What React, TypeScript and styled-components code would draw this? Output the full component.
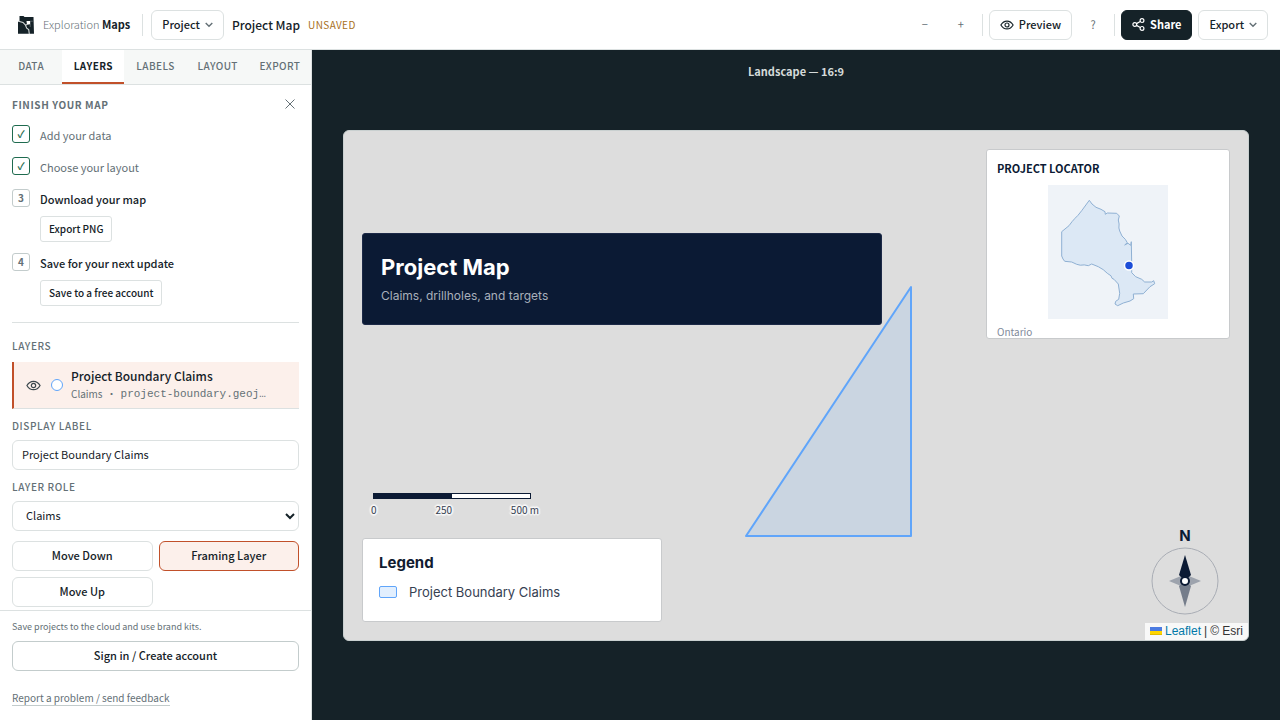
import React from "react";
import styled, { createGlobalStyle, css } from "styled-components";

const ui = `"Noto Sans CJK SC", "Noto Sans", sans-serif`;
const mapFont = `Inter, "Noto Sans", sans-serif`;
const ink = "#152228";
const muted = "#647076";
const line = "#dce1e1";
const accent = "#c1502a";

const Global = createGlobalStyle`
  * { box-sizing: border-box; }
  body { margin: 0; background: ${ink}; color: ${ink}; font: 400 11px/16px ${ui}; }
  button, input, select { font: inherit; color: inherit; margin: 0; }
  button { cursor: pointer; }
  h1, h2, h3, p, ol, ul { margin: 0; padding: 0; list-style: none; }
`;

const Page = styled.div`
  height: 100vh;
  display: grid;
  grid-template-rows: 50px minmax(0, 1fr);
`;

const TopBar = styled.header`
  display: flex;
  align-items: center;
  gap: 8px;
  padding: 0 12px 0 18px;
  background: #fff;
  border-bottom: 1px solid ${line};
`;

const Brand = styled.a`
  display: flex;
  align-items: center;
  gap: 9px;
  margin-right: 4px;
  color: ${muted};
  font-weight: 300;
  text-decoration: none;
  white-space: nowrap;
  span { padding-bottom: 2px; }
  b { color: ${ink}; font-weight: 700; }
`;

const Rule = styled.span`
  width: 1px;
  height: 22px;
  background: ${line};
`;

const Button = styled.button<{ $tone?: "dark" | "active" | "strong" }>`
  display: inline-flex;
  align-items: center;
  justify-content: center;
  gap: 5px;
  height: 30px;
  padding: 0 10px 2px;
  border: 1px solid ${line};
  border-radius: 6px;
  background: #fff;
  font-weight: 500;
  white-space: nowrap;
  svg { margin-top: 2px; }
  ${({ $tone }) => $tone === "dark" && css`background: ${ink}; border-color: ${ink}; color: #fff; font-weight: 700;`}
  ${({ $tone }) => $tone === "active" && css`background: #fcf0eb; border-color: ${accent};`}
  ${({ $tone }) => $tone === "strong" && css`border-color: #c3cccc;`}
`;

const GhostButton = styled.button`
  width: 30px;
  height: 30px;
  padding: 0 0 2px;
  border: 0;
  background: none;
  color: ${muted};
`;

const ProjectName = styled.h1`
  font-size: 12px;
  line-height: 16px;
  font-weight: 500;
`;

const Unsaved = styled.span`
  color: #a8701c;
  font-size: 10px;
  letter-spacing: 0.04em;
`;

const Tools = styled.div`
  display: flex;
  align-items: center;
  gap: 6px;
  margin-left: auto;
`;

const Body = styled.div`
  display: grid;
  grid-template-columns: 312px minmax(0, 1fr);
  min-height: 0;
`;

const Sidebar = styled.aside`
  display: flex;
  flex-direction: column;
  min-height: 0;
  background: #fff;
  border-right: 1px solid ${line};
`;

const Tabs = styled.div`
  display: grid;
  grid-template-columns: repeat(5, minmax(0, 1fr));
  height: 35px;
  flex: none;
  border-bottom: 1px solid ${line};
  background: #f6f8f7;
`;

const Tab = styled.button<{ $active?: boolean }>`
  padding: 0;
  border: 0;
  border-bottom: 2px solid ${({ $active }) => ($active ? accent : "transparent")};
  background: ${({ $active }) => ($active ? "#fff" : "transparent")};
  color: ${({ $active }) => ($active ? ink : muted)};
  font-size: 10px;
  font-weight: ${({ $active }) => ($active ? 700 : 500)};
  letter-spacing: 0.04em;
`;

const Panel = styled.div`
  flex: 1;
  min-height: 0;
  overflow: hidden;
  padding: 11px 12px 0;
`;

const Caption = styled.h2<{ $wide?: boolean }>`
  display: block;
  color: ${muted};
  font-size: 10px;
  line-height: 16px;
  font-weight: ${({ $wide }) => ($wide ? 700 : 500)};
  letter-spacing: 0.06em;
`;

const ChecklistHead = styled.div`
  display: flex;
  justify-content: space-between;
  align-items: center;
  height: 18px;
  margin-bottom: 11px;
`;

const CloseButton = styled.button`
  display: flex;
  padding: 2px 3px 4px;
  border: 0;
  background: none;
  color: ${muted};
`;

const Checklist = styled.ol`
  display: grid;
  gap: 11px;
  margin-bottom: 15px;
  padding-bottom: 16px;
  border-bottom: 1px solid ${line};
`;

const Step = styled.li<{ $done?: boolean }>`
  display: grid;
  grid-template-columns: 18px 1fr;
  column-gap: 10px;
  align-items: start;
  min-height: 21px;
  color: ${({ $done }) => ($done ? muted : ink)};
  font-weight: ${({ $done }) => ($done ? 400 : 500)};
`;

const StepMark = styled.span<{ $done?: boolean }>`
  display: flex;
  align-items: center;
  justify-content: center;
  height: 18px;
  border: 1px solid ${({ $done }) => ($done ? "#1f6b4f" : "#c3cccc")};
  border-radius: 3px;
  color: ${({ $done }) => ($done ? "#1f6b4f" : muted)};
  font-size: 10px;
  line-height: 16px;
  font-weight: 700;
`;

const StepText = styled.div`
  display: flex;
  flex-direction: column;
  align-items: flex-start;
  gap: 8px;
  padding-top: 1px;
  line-height: 18px;
`;

const SmallButton = styled.button`
  height: 26px;
  padding: 0 8px;
  border: 1px solid ${line};
  border-radius: 3px;
  background: #fff;
  font-size: 10px;
  font-weight: 500;
`;

const LayerRow = styled.div`
  display: flex;
  align-items: center;
  gap: 10px;
  height: 47px;
  margin: 8px 0 9px;
  padding: 0 10px 0 12px;
  border-left: 2px solid ${accent};
  border-bottom: 1px solid ${line};
  background: #fcf0eb;
`;

const IconButton = styled.button`
  display: flex;
  padding: 0;
  border: 0;
  background: none;
`;

const Swatch = styled.span`
  width: 12px;
  height: 12px;
  margin-right: -2px;
  border: 1px solid #60a5fa;
  border-radius: 50%;
  background: #fff;
`;

const LayerText = styled.div`
  min-width: 0;
  h3 { margin-bottom: 2px; font-size: 12px; line-height: 16px; font-weight: 500; }
  p { display: flex; gap: 4px; color: ${muted}; font-size: 10px; line-height: 16px; white-space: nowrap; }
  code { font-family: "Liberation Mono", monospace; font-size: 11px; }
`;

const Fields = styled.div`
  display: grid;
  gap: 9px;
  margin-bottom: 10px;
`;

const Field = styled.label`
  display: block;
  input, select {
    display: block;
    width: 100%;
    height: 30px;
    margin-top: 6px;
    padding: 0 9px 2px;
    border: 1px solid ${line};
    border-radius: 6px;
    background: #fff;
  }
`;

const Actions = styled.div`
  display: grid;
  grid-template-columns: 1fr 1fr;
  gap: 6px;
`;

const Footer = styled.footer`
  flex: none;
  display: grid;
  padding: 8px 12px 14px;
  border-top: 1px solid ${line};
  color: ${muted};
  p { font-size: 9px; }
  ${Button} { margin: 6px 0 19px; color: ${ink}; }
`;

const Feedback = styled.a`
  justify-self: start;
  border-bottom: 1px solid #c3cccc;
  color: ${muted};
  font-size: 10px;
  line-height: 15px;
  text-decoration: none;
`;

const Stage = styled.main`
  display: grid;
  grid-template-rows: 14px minmax(0, 1fr) 14px;
  padding: 14px 31px;
  color: #d5dbda;
`;

const StageLabel = styled.p`
  text-align: center;
  line-height: 14px;
  font-weight: 700;
`;

const MapCanvas = styled.section`
  position: relative;
  align-self: center;
  aspect-ratio: 906 / 511;
  overflow: hidden;
  border: 1px solid #c9d0d0;
  border-radius: 6px;
  background: #ddd;
  color: #0b1a34;
  font-family: ${mapFont};
`;

const Claim = styled.svg`
  position: absolute;
  inset: 0;
  width: 100%;
  height: 100%;
`;

const TitleCard = styled.div`
  position: absolute;
  left: 18px;
  top: 102px;
  width: 520px;
  height: 92px;
  padding: 18px;
  border: 1px solid #1c2947;
  border-radius: 3px;
  background: #0b1a34;
  color: #fff;
  h2 { font-size: 22px; line-height: 30px; font-weight: 700; }
  p { margin-top: 6px; color: #a9b0bb; font-size: 12px; line-height: 16px; }
`;

const Card = styled.div`
  position: absolute;
  border: 1px solid #c8cacc;
  border-radius: 3px;
  background: #fff;
`;

const LocatorCard = styled(Card)`
  top: 18px;
  right: 18px;
  width: 244px;
  height: 190px;
  padding: 10px;
  overflow: hidden;
  font-family: ${ui};
  h2 { font-size: 11px; line-height: 16px; font-weight: 700; }
  svg { display: block; margin: 9px auto 5px; }
  p { color: #7f899a; font-size: 10px; }
`;

const LegendCard = styled(Card)`
  left: 18px;
  bottom: 18px;
  width: 300px;
  height: 84px;
  padding: 14px 16px;
  color: #111c30;
  h2 { font-size: 15px; line-height: 20px; font-weight: 700; }
  p { display: flex; align-items: center; gap: 12px; margin-top: 9px; color: #364152; font-size: 13px; line-height: 20px; }
`;

const LegendSwatch = styled.span`
  width: 18px;
  height: 12px;
  border: 1px solid #60a5fa;
  border-radius: 2px;
  background: #e2effe;
`;

const Scale = styled.div`
  position: absolute;
  left: 27px;
  bottom: 123px;
  width: 168px;
`;

const ScaleBar = styled.div`
  width: 158px;
  height: 6px;
  margin-left: 2px;
  border: 1px solid #0b1a34;
  background: linear-gradient(90deg, #0b1a34 50%, #fff 50%);
`;

const ScaleLabels = styled.div`
  display: flex;
  justify-content: space-between;
  margin-top: 4px;
  color: #364152;
  font: 400 10px/14px ${ui};
  text-shadow: 2px 0 1px #f4f4f4, -2px 0 1px #f4f4f4, 0 2px 1px #f4f4f4, 0 -2px 1px #f4f4f4, 1px 1px 1px #fff, -1px -1px 1px #fff, 1px -1px 1px #fff, -1px 1px 1px #fff;
`;

const North = styled.div`
  position: absolute;
  right: 28px;
  bottom: 24px;
  display: grid;
  justify-items: center;
  font-size: 15px;
  line-height: 20px;
  font-weight: 700;
`;

const Attribution = styled.div`
  position: absolute;
  right: 0;
  bottom: 0;
  display: flex;
  align-items: center;
  gap: 3px;
  padding: 0 5px;
  background: rgba(255, 255, 255, 0.8);
  color: #333;
  font: 12px/17px "Liberation Sans", Arial, sans-serif;
  a { display: flex; align-items: center; gap: 3px; color: #0078a8; text-decoration: none; }
`;

const Eye = ({ size = 14, color = "currentColor" }: { size?: number; color?: string }) => (
  <svg width={size} height={size} viewBox="0 0 16 16" fill="none" stroke={color} strokeWidth="1.3" aria-hidden="true">
    <path d="M1 8c1.7-3 4.1-4.5 7-4.5S13.300 5 15 8c-1.7 3-4.1 4.5-7 4.5S2.700 11 1 8Z" />
    <circle cx="8" cy="8" r="2.3" />
  </svg>
);

const Chevron = () => (
  <svg width="8" height="6" viewBox="0 0 8 6" fill="none" stroke={muted} strokeWidth="1.4" aria-hidden="true">
    <path d="M0.7 1 4 4.3 7.3 1" />
  </svg>
);

const ShareIcon = () => (
  <svg width="13" height="13" viewBox="0 0 13 13" fill="none" stroke="currentColor" strokeWidth="1.2" aria-hidden="true">
    <circle cx="2.8" cy="6.5" r="1.9" />
    <circle cx="10" cy="2.6" r="1.9" />
    <circle cx="10" cy="10.4" r="1.9" />
    <path d="m4.5 5.6 3.8-2.1M4.5 7.400l3.8 2.1" />
  </svg>
);

const Logo = () => (
  <svg width="16" height="18" viewBox="0 0 16 18" aria-hidden="true">
    <path d="M1.500 0h4l1 1H15.500l.5 16.800H0V6l1.500-1Z" fill={ink} />
    <path d="M0.500 5.300 5 6.500l2.500 2.700L9 8.500M7.500 9.200l1.200 3 2 1.300.6 4.500" fill="none" stroke="#d5dada" strokeWidth="1.1" />
    <path d="M8.500 5h3.700v3.200L9 8.800Z" fill="#fff" />
    <path d="M12.200 5.200h2.600M12.200 8v3" fill="none" stroke="#7b8589" strokeWidth=".6" />
  </svg>
);

const tabs = ["DATA", "LAYERS", "LABELS", "LAYOUT", "EXPORT"];
const steps = [
  { label: "Add your data", done: true },
  { label: "Choose your layout", done: true },
  { label: "Download your map", action: "Export PNG" },
  { label: "Save for your next update", action: "Save to a free account" },
];

export default function App() {
  return (
    <Page>
      <Global />
      <TopBar>
        <Brand href="#"><Logo /><span>Exploration <b>Maps</b></span></Brand>
        <Rule />
        <Button>Project <Chevron /></Button>
        <ProjectName>Project Map</ProjectName>
        <Unsaved>UNSAVED</Unsaved>
        <Tools>
          <GhostButton aria-label="Zoom out">−</GhostButton>
          <GhostButton aria-label="Zoom in">+</GhostButton>
          <Rule />
          <Button><Eye /> Preview</Button>
          <GhostButton aria-label="Help">?</GhostButton>
          <Rule />
          <Button $tone="dark"><ShareIcon /> Share</Button>
          <Button>Export <Chevron /></Button>
        </Tools>
      </TopBar>
      <Body>
        <Sidebar>
          <Tabs role="tablist">
            {tabs.map((t) => (
              <Tab key={t} role="tab" aria-selected={t === "LAYERS"} $active={t === "LAYERS"}>{t}</Tab>
            ))}
          </Tabs>
          <Panel>
            <ChecklistHead>
              <Caption $wide>FINISH YOUR MAP</Caption>
              <CloseButton aria-label="Dismiss">
                <svg width="12" height="12" viewBox="0 0 12 12" stroke="currentColor" fill="none"><path d="m1.5 1.5 9 9m0-9-9 9" /></svg>
              </CloseButton>
            </ChecklistHead>
            <Checklist>
              {steps.map((s, i) => (
                <Step key={s.label} $done={s.done}>
                  <StepMark $done={s.done}>{s.done ? "✓" : i + 1}</StepMark>
                  <StepText>
                    {s.label}
                    {s.action && <SmallButton>{s.action}</SmallButton>}
                  </StepText>
                </Step>
              ))}
            </Checklist>
            <Caption>LAYERS</Caption>
            <LayerRow>
              <IconButton aria-label="Toggle visibility"><Eye size={15} color="#3c484d" /></IconButton>
              <Swatch />
              <LayerText>
                <h3>Project Boundary Claims</h3>
                <p><span>Claims</span><span>·</span><code>project-boundary.geoj…</code></p>
              </LayerText>
            </LayerRow>
            <Fields>
              <Field>
                <Caption as="span">DISPLAY LABEL</Caption>
                <input defaultValue="Project Boundary Claims" />
              </Field>
              <Field>
                <Caption as="span">LAYER ROLE</Caption>
                <select defaultValue="Claims"><option>Claims</option></select>
              </Field>
            </Fields>
            <Actions>
              <Button>Move Down</Button>
              <Button $tone="active">Framing Layer</Button>
              <Button>Move Up</Button>
            </Actions>
          </Panel>
          <Footer>
            <p>Save projects to the cloud and use brand kits.</p>
            <Button $tone="strong">Sign in / Create account</Button>
            <Feedback href="#">Report a problem / send feedback</Feedback>
          </Footer>
        </Sidebar>
        <Stage>
          <StageLabel>Landscape — 16:9</StageLabel>
          <MapCanvas>
            <Claim viewBox="0 0 904 509">
              <path d="M567 156V405H402Z" fill="#60a5fa" fillOpacity="0.15" stroke="#60a5fa" strokeWidth="2" strokeLinejoin="round" />
            </Claim>
            <TitleCard>
              <h2>Project Map</h2>
              <p>Claims, drillholes, and targets</p>
            </TitleCard>
            <LocatorCard>
              <h2>PROJECT LOCATOR</h2>
              <svg width="120" height="134" viewBox="0 0 120 134" role="img" aria-label="Ontario">
                <rect width="120" height="134" fill="#eff3f8" />
                <path
                  d="M41.300 15.300 44 19l4 3.300 5 2 4 2.400.3 2.600 2-1.300 9.400.3 2.600 2.700-1 4 .8 4-.2 4 .8 3 2.300 5 3.300 3.300 2 3.400-2.600 2.300 3.300-1.700 2.700 2 .6-3.600.4 21.600v9.400l4 4 6 2.600 3 2.700 7 0 2-1.300 1 3-4.700 3-6.700 7-10 .3.4 4.700-3.700 2.300-6.700 2-5.600 2.700-2.700-1.700.7-2.700 3-2 1-6-1.400-9.300-4.300-4.700-2-1-1-2.500-3.700-2.500-4-3.600-5-3-6.600-2.700-3.400 1.700-4-.8-4 .3-3.600-.9-5-2.300-7-.7-1.700-2.300-1.300-3V46.700l7.300-6 3-4 3-3.400 3-3 3.700-4.600Z"
                  fill="#dce8f5" stroke="#8fb0d3" strokeLinejoin="round"
                />
                <circle cx="81" cy="80.5" r="4.5" fill="#1d4ed8" stroke="#fff" strokeWidth="1.5" />
              </svg>
              <p>Ontario</p>
            </LocatorCard>
            <Scale>
              <ScaleBar />
              <ScaleLabels><span>0</span><span>250</span><span>500 m</span></ScaleLabels>
            </Scale>
            <LegendCard>
              <h2>Legend</h2>
              <p><LegendSwatch />Project Boundary Claims</p>
            </LegendCard>
            <North>
              N
              <svg width="70" height="70" viewBox="0 0 70 70" aria-hidden="true">
                <circle cx="35" cy="35" r="33" fill="none" stroke="#a9adb5" />
                <path d="m19 35 12-5h8l12 5-12 5h-8Z" fill="#9da3ad" />
                <path d="m35 61-6-21 6-5 6 5Z" fill="#757d8b" />
                <path d="m35 9 6 20-6 6-6-6Z" fill="#0b1a34" />
                <circle cx="35" cy="35" r="4" fill="#fff" stroke="#0b1a34" strokeWidth="2" />
              </svg>
            </North>
            <Attribution>
              <a href="#">
                <svg width="12" height="8" viewBox="0 0 12 8" aria-hidden="true"><path fill="#4C7BE1" d="M0 0h12v4H0z" /><path fill="#FFD500" d="M0 4h12v3H0z" /><path fill="#E0BC00" d="M0 7h12v1H0z" /></svg>
                Leaflet
              </a>
              <span>|</span><span>© Esri</span>
            </Attribution>
          </MapCanvas>
        </Stage>
      </Body>
    </Page>
  );
}
